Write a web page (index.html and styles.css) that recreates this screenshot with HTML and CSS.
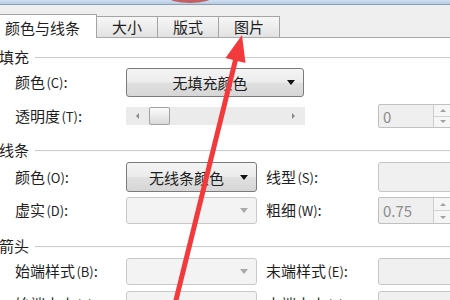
FILE: index.html
```html
<!DOCTYPE html>
<html lang="zh-CN">
<head>
<meta charset="utf-8">
<link rel="stylesheet" href="styles.css">
</head>
<body>
<div class="titlebar"></div>
<div class="tabs">
  <div class="tab active">颜色与线条</div>
  <div class="tab">大小</div>
  <div class="tab">版式</div>
  <div class="tab">图片</div>
</div>
<div class="panel">
  <div class="group g-fill"><span>填充</span><i></i></div>
  <div class="row r1">
    <label class="lbl">颜色 <span class="k">(C)</span>:</label>
    <div class="combo wide"><span class="ctext">无填充颜色</span><b class="tri"></b></div>
  </div>
  <div class="row r2">
    <label class="lbl">透明度 <span class="k">(T)</span>:</label>
    <div class="slider"><span class="arr al"></span><span class="thumb"></span><span class="arr ar"></span></div>
    <div class="spin far"><span class="val">0</span><div class="btns"><em class="up"></em><em class="dn"></em></div></div>
  </div>
  <div class="group g-line"><span>线条</span><i></i></div>
  <div class="row r3">
    <label class="lbl">颜色 <span class="k">(O)</span>:</label>
    <div class="combo"><span class="ctext">无线条颜色</span><b class="tri"></b></div>
    <label class="lbl2">线型 <span class="k">(S)</span>:</label>
    <div class="box"></div>
  </div>
  <div class="row r4">
    <label class="lbl">虚实 <span class="k">(D)</span>:</label>
    <div class="combo off"><span class="ctext"></span><b class="tri"></b></div>
    <label class="lbl2">粗细 <span class="k">(W)</span>:</label>
    <div class="spin"><span class="val">0.75</span><div class="btns"><em class="up"></em><em class="dn"></em></div></div>
  </div>
  <div class="group g-arrow"><span>箭头</span><i></i></div>
  <div class="row r5">
    <label class="lbl">始端样式 <span class="k">(B)</span>:</label>
    <div class="combo off"><span class="ctext"></span><b class="tri"></b></div>
    <label class="lbl2">末端样式 <span class="k">(E)</span>:</label>
    <div class="box"></div>
  </div>
  <div class="row r6">
    <label class="lbl">始端大小 <span class="k">(Z)</span>:</label>
    <div class="combo off"><span class="ctext"></span><b class="tri"></b></div>
    <label class="lbl2">末端大小 <span class="k">(Z)</span>:</label>
    <div class="box"></div>
  </div>
</div>
<svg class="overlay" width="450" height="300" viewBox="0 0 450 300">
  <ellipse cx="190" cy="-3" rx="22" ry="6" fill="#c24a4a" opacity="0.85"/>
  <line x1="175" y1="304" x2="236" y2="58" stroke="#f23a3c" stroke-width="5" stroke-linecap="round"/>
  <polygon points="242,35 225.5,58 245.5,63" fill="#f23a3c"/>
</svg>
</body>
</html>
```
FILE: styles.css
```css
* { box-sizing: border-box; margin: 0; padding: 0; }
html, body { width: 450px; height: 300px; overflow: hidden; }
body {
  background: #fff;
  font-family: "Noto Sans CJK SC", "Noto Sans", sans-serif;
  font-size: 15px;
  color: #1e1e1e;
  position: relative;
}
.titlebar {
  height: 5px;
  background: linear-gradient(#cfe0f1, #b6cce4);
  border-bottom: 1px solid #8e9fb3;
}
.tabs {
  height: 33px;
  background: #efefef;
  border-bottom: 1px solid #a9a9a9;
  display: flex;
  align-items: flex-end;
}
.tab {
  width: 61px;
  height: 21px;
  border: 1px solid #a4a4a4;
  border-bottom: none;
  border-left: none;
  background: linear-gradient(#f7f7f7, #e2e2e2);
  text-align: center;
  line-height: 20px;
  font-size: 15px;
}
.tab.active {
  width: 97px;
  height: 24px;
  margin-bottom: -1px;
  background: #fff;
  text-align: left;
  padding-left: 5px;
  line-height: 25px;
}
.panel {
  padding-top: 10px;
  display: flex;
  flex-direction: column;
}
.group {
  display: flex;
  align-items: center;
  height: 18px;
}
.group span { margin-left: -1px; line-height: 18px; white-space: nowrap; }
.group i {
  flex: 1;
  height: 1px;
  margin-left: 6px;
  background: #cdcdcd;
  box-shadow: 0 1px 0 #fafafa;
}
.g-line { margin-top: 13px; }
.g-arrow { margin-top: 13px; }
.row { display: flex; align-items: center; flex-shrink: 0; }
.r1 { height: 29px; margin-top: 2px; }
.r2 { height: 24px; margin-top: 7px; }
.r3 { height: 30px; margin-top: 3px; }
.r4 { height: 27px; margin-top: 5px; }
.r5 { height: 27px; margin-top: 3px; }
.r6 { height: 27px; margin-top: 6px; }
.lbl {
  width: 126px;
  flex-shrink: 0;
  padding-left: 15px;
  white-space: nowrap;
  line-height: 20px;
}
.lbl2 {
  width: 112px;
  flex-shrink: 0;
  margin-left: 9px;
  white-space: nowrap;
  line-height: 20px;
}
.k { font-size: 13px; margin-left: -2px; }
.combo {
  width: 131px;
  flex-shrink: 0;
  height: 100%;
  border: 1px solid #7b7b7b;
  border-radius: 3px;
  background: linear-gradient(#f4f4f4 0%, #ececec 48%, #e0e0e0 52%, #d6d6d6 100%);
  display: flex;
  align-items: center;
}
.combo.wide { width: 178px; }
.ctext { flex: 1; text-align: center; padding-left: 6px; white-space: nowrap; }
.tri {
  width: 0; height: 0;
  border-left: 4px solid transparent;
  border-right: 4px solid transparent;
  border-top: 5px solid #111;
  margin-right: 8px;
}
.combo.off {
  border-color: #c9c9c9;
  background: #f3f3f3;
}
.combo.off .tri { border-top-color: #a8a8a8; }
.box {
  width: 100px;
  flex-shrink: 0;
  height: 100%;
  border: 1px solid #c6c6c6;
  border-radius: 3px;
  background: #f0f0f0;
}
.slider {
  width: 179px;
  flex-shrink: 0;
  height: 18px;
  background: #ebebeb;
  display: flex;
  align-items: center;
}
.arr { width: 0; height: 0; border-top: 3px solid transparent; border-bottom: 3px solid transparent; }
.al { border-right: 3px solid #8a8a8a; margin-left: 10px; }
.ar { border-left: 3px solid #8a8a8a; margin-left: auto; margin-right: 10px; }
.thumb {
  width: 21px;
  height: 18px;
  margin-left: 10px;
  border: 1px solid #a2a2a2;
  border-radius: 2px;
  background: linear-gradient(#fbfbfb, #d9d9d9);
}
.spin {
  width: 90px;
  flex-shrink: 0;
  height: 100%;
  border: 1px solid #c0c0c0;
  border-radius: 2px;
  background: #efefef;
  display: flex;
  align-items: center;
}
.spin.far { margin-left: 73px; }
.val { width: 54px; padding-left: 4px; color: #8d8d8d; }
.btns {
  width: 18px;
  height: 100%;
  display: flex;
  flex-direction: column;
  border-left: 1px solid #cfcfcf;
}
.btns em {
  flex: 1;
  display: flex;
  align-items: center;
  justify-content: center;
  background: #f6f6f6;
}
.btns em.up { border-bottom: 1px solid #d2d2d2; }
.btns em::before {
  content: "";
  width: 0; height: 0;
  border-left: 3px solid transparent;
  border-right: 3px solid transparent;
}
.btns em.up::before { border-bottom: 3px solid #a0a0a0; }
.btns em.dn::before { border-top: 3px solid #a0a0a0; }
.overlay {
  position: absolute;
  left: 0;
  top: 0;
  pointer-events: none;
}
```
